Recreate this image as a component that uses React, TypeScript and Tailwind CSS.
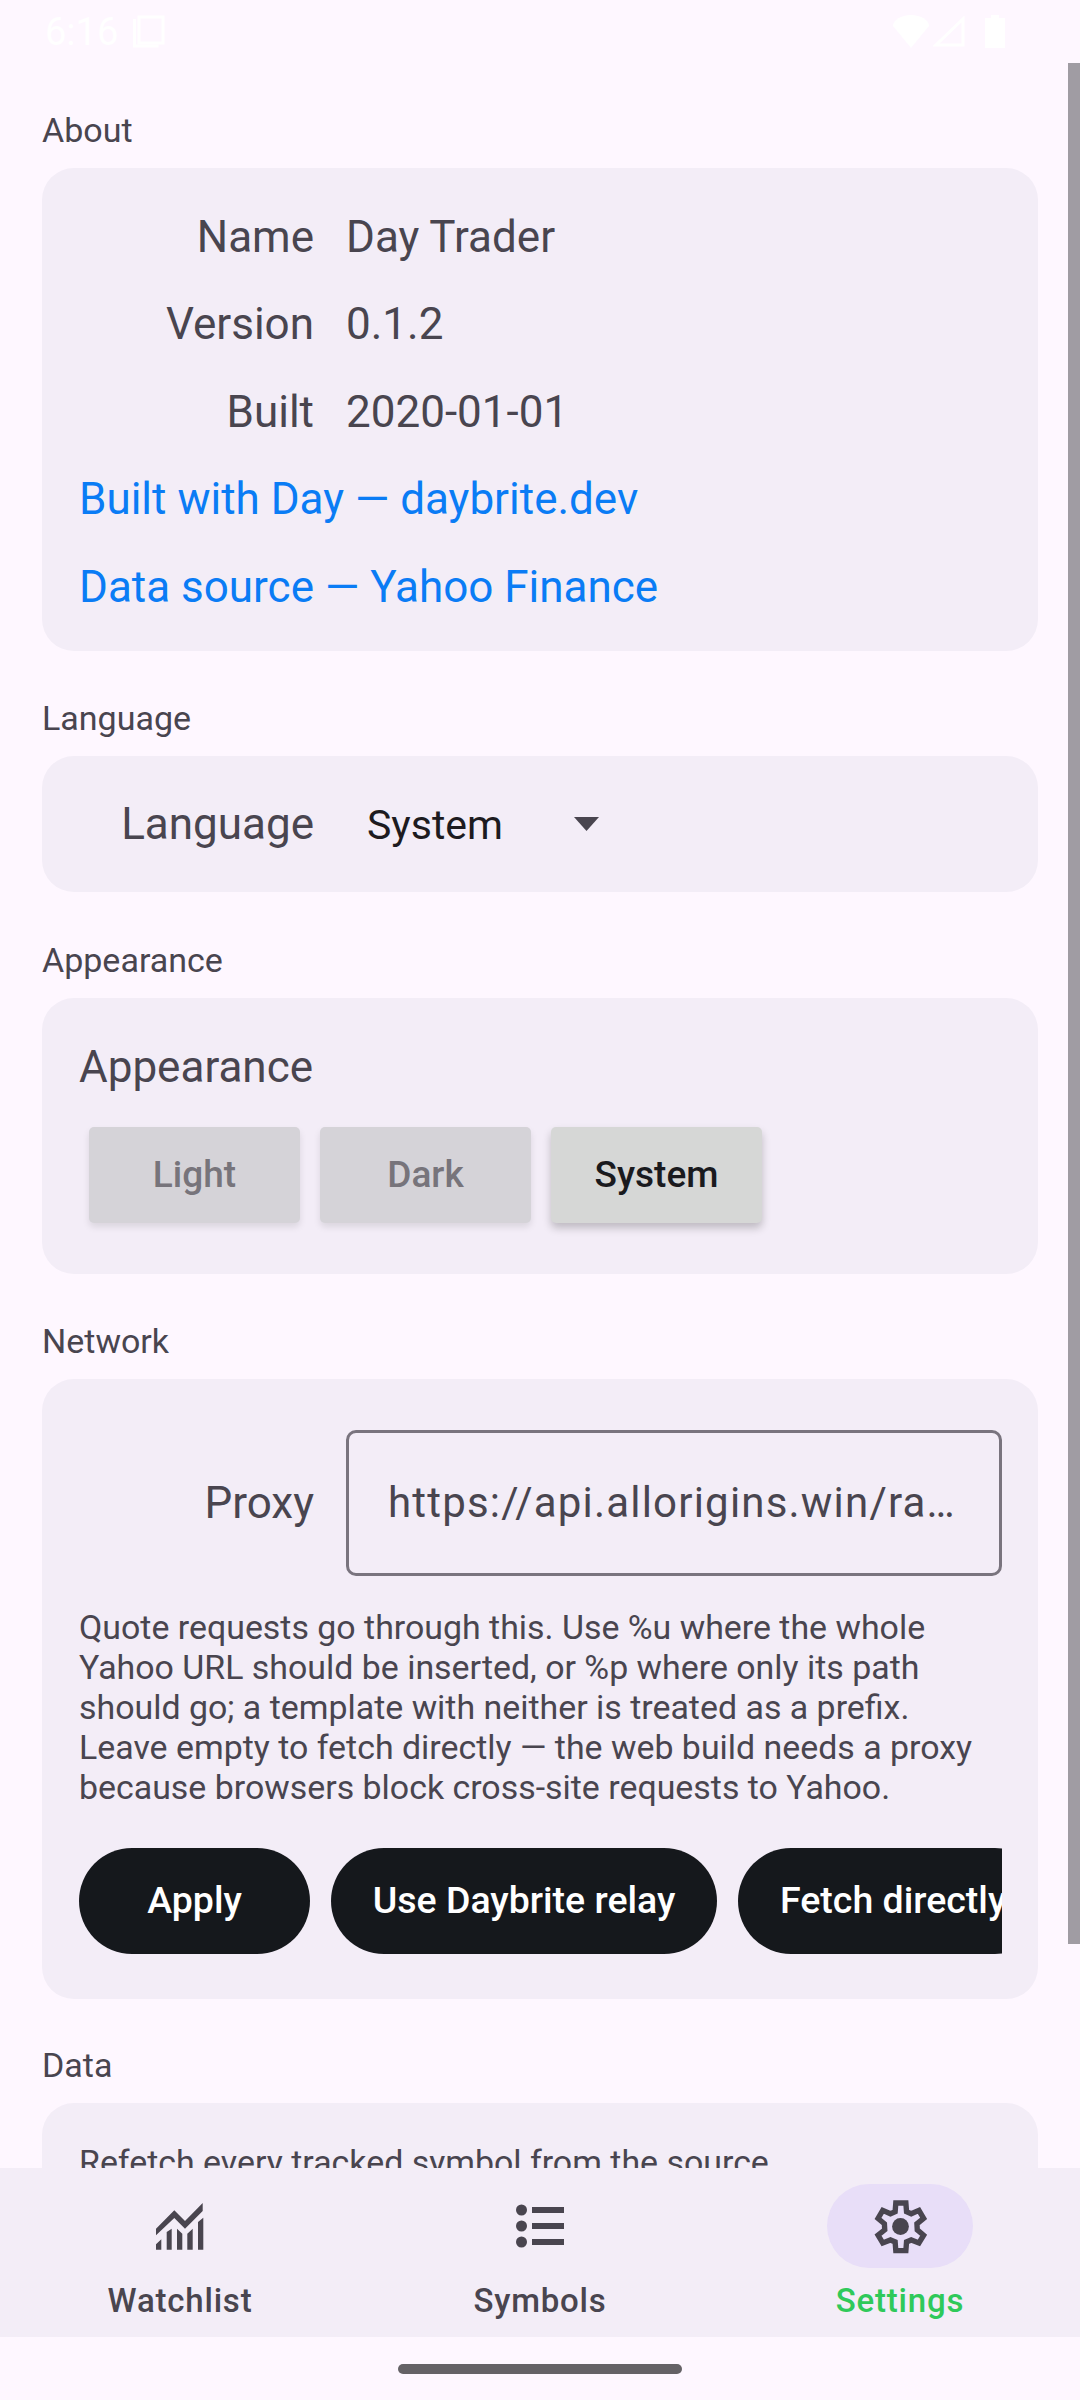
import React from "react";

const font = { fontFamily: "Roboto, sans-serif" };

function Row({ label, value }: { label: string; value: string }) {
  return (
    <div className="flex items-center h-[87.5px]">
      <div className="w-[235px] text-right text-[44px] leading-none text-[#49454f]">{label}</div>
      <div className="ml-[32px] text-[44px] leading-none text-[#49454f]">{value}</div>
    </div>
  );
}

function Section({ title, children, className }: { title: string; children: React.ReactNode; className: string }) {
  return (
    <section>
      <div className="h-[38px] flex items-center text-[34px] text-[#49454f] leading-none">{title}</div>
      <div className={"mt-[19px] rounded-[32px] bg-[#f3edf7] pl-[37px] pr-[36px] " + className}>{children}</div>
    </section>
  );
}

function SegBtn({ label, active }: { label: string; active?: boolean }) {
  return (
    <div
      className={
        "w-[211px] h-[96px] rounded-[5px] flex items-center justify-center text-[37px] font-medium " +
        (active
          ? "bg-[#d6d7d6] text-[#1a1a1e] shadow-[0_5px_8px_rgba(0,0,0,0.22)]"
          : "bg-[#d5d3d8] text-[#77747b] shadow-[0_4px_7px_rgba(0,0,0,0.1)]")
      }
    >
      {label}
    </div>
  );
}

function Pill({ label, className }: { label: string; className: string }) {
  return (
    <div className={"h-[106px] rounded-full bg-[#15181c] text-white text-[37.5px] font-medium flex items-center shrink-0 " + className}>
      <span className="whitespace-nowrap">{label}</span>
    </div>
  );
}

function NavItem({ label, active, children }: { label: string; active?: boolean; children: React.ReactNode }) {
  return (
    <div className="flex-1 flex flex-col items-center pt-[16px]">
      <div className={"w-[146px] h-[84px] rounded-[42px] flex items-center justify-center " + (active ? "bg-[#e8def8]" : "")}>
        {children}
      </div>
      <div className={"mt-[11px] text-[33px] leading-[44px] font-medium tracking-[0.8px] " + (active ? "text-[#2fc95a]" : "text-[#49454f]")}>
        {label}
      </div>
    </div>
  );
}

export default function App() {
  return (
    <div style={font} className="relative w-[1080px] h-[2400px] overflow-hidden bg-[#fef7ff] flex flex-col">
      <div className="h-[63px] shrink-0 flex items-center justify-between pl-[45px] pr-[75px] text-white">
        <div className="flex items-center gap-[15px] text-[38px] leading-none">
          <span>6:16</span>
          <svg width="32" height="34" viewBox="0 0 32 34" fill="none" stroke="#fff" strokeWidth="3">
            <rect x="6" y="2" width="24" height="26" />
            <path d="M1.500 4v27h24" />
          </svg>
        </div>
        <div className="flex items-center gap-[3px]">
          <svg width="38" height="33" viewBox="0 0 38 33" fill="#fff"><path d="M19 33 1 11C1 5 9 0 19 0s18 5 18 11z" /></svg>
          <svg width="32" height="31" viewBox="0 0 32 31" fill="none" stroke="#fff" strokeWidth="3" className="mr-[17px]"><path d="M30 3v26H3z" /></svg>
          <svg width="20" height="33" viewBox="0 0 20 33" fill="#fff"><path d="M6 0h8v3h6v30H0V3h6z" /></svg>
        </div>
      </div>

      <div className="flex-1 min-h-0 overflow-hidden pl-[42px] pr-[42px] pt-[48px]">
        <Section title="About" className="pt-[25px] pb-[20px]">
          <Row label="Name" value="Day Trader" />
          <Row label="Version" value="0.1.2" />
          <Row label="Built" value="2020-01-01" />
          <div className="h-[87.5px] flex items-center text-[44px] leading-none text-[#0a7cf5]">Built with Day — daybrite.dev</div>
          <div className="h-[87.5px] flex items-center text-[44px] leading-none text-[#0a7cf5]">Data source — Yahoo Finance</div>
        </Section>

        <div className="mt-[48px]">
          <Section title="Language" className="h-[136px] flex items-center">
            <div className="w-[235px] text-right text-[44px] leading-none text-[#49454f]">Language</div>
            <div className="ml-[53px] pt-[3px] text-[41px] leading-none text-[#1d1b20]">System</div>
            <svg className="ml-[71px]" width="25" height="14" viewBox="0 0 25 14" fill="#49454f"><path d="M0 0h25L12.500 14z" /></svg>
          </Section>
        </div>

        <div className="mt-[49px]">
          <Section title="Appearance" className="h-[276px] pt-[43px]">
            <div className="text-[44px] leading-[52px] text-[#49454f]">Appearance</div>
            <div className="mt-[34px] ml-[10px] flex gap-[20px]">
              <SegBtn label="Light" />
              <SegBtn label="Dark" />
              <SegBtn label="System" active />
            </div>
          </Section>
        </div>

        <div className="mt-[48px]">
          <Section title="Network" className="h-[620px] pt-[51px]">
            <div className="flex items-center">
              <div className="w-[235px] text-right text-[44px] leading-none text-[#49454f]">Proxy</div>
              <div className="ml-[32px] w-[656px] h-[146px] rounded-[10px] border-[3px] border-[#79747e] flex items-center px-[39px] text-[42px] tracking-[1.2px] text-[#49454f]">
                <span className="whitespace-nowrap">https://api.allorigins.win/ra…</span>
              </div>
            </div>
            <p className="mt-[32px] text-[33.9px] leading-[40px] text-[#49454f]">
              Quote requests go through this. Use %u where the whole Yahoo URL should be inserted, or %p where only its path should go; a template with neither is treated as a prefix. Leave empty to fetch directly — the web build needs a proxy because browsers block cross-site requests to Yahoo.
            </p>
            <div className="mt-[40px] flex gap-[21px] overflow-hidden">
              <Pill label="Apply" className="w-[231px] justify-center" />
              <Pill label="Use Daybrite relay" className="w-[386px] justify-center" />
              <Pill label="Fetch directly" className="pl-[42px] pr-[42px]" />
            </div>
          </Section>
        </div>

        <div className="mt-[47px]">
          <Section title="Data" className="h-[300px] pt-[40px]">
            <p className="text-[33.9px] leading-[40px] text-[#49454f]">Refetch every tracked symbol from the source</p>
          </Section>
        </div>
      </div>

      <nav className="shrink-0 h-[169px] bg-[#f3edf7] flex">
        <NavItem label="Watchlist">
          <svg width="48" height="47" viewBox="0 0 48 47" fill="#49454f">
            <path d="M0 25.700 18.300 7.300 29 18 46.700 0v8L29 25.700 18.300 15 0 32.300z" />
            <path d="M0 41.300l5.300-5v10.400H0zM10.700 29l5-3.300v21h-5zM21 25.700l5.300 5v16H21zM31.300 30.700l5.400-5v21h-5.400zM42 19l5.300-4.300v32H42z" />
          </svg>
        </NavItem>
        <NavItem label="Symbols">
          <svg width="48" height="44" viewBox="0 0 48 44" fill="#49454f">
            <circle cx="5.500" cy="6" r="5.500" />
            <circle cx="5.500" cy="22" r="5.500" />
            <circle cx="5.500" cy="38" r="5.500" />
            <path d="M16 3h32v6H16zM16 19h32v6H16zM16 35h32v6H16z" />
          </svg>
        </NavItem>
        <NavItem label="Settings" active>
          <svg width="55" height="55" viewBox="156 54 164 164">
            <path
              d="M224 66H254L256 92 270 98 293 88 307 112 287 128 288 146 307 162 293 185 270 176 256 182 254 208H224L222 182 208 176 185 185 171 162 191 146 190 128 171 112 185 88 208 98 222 92z"
              fill="none"
              stroke="#49454f"
              strokeWidth="16"
            />
            <circle cx="238" cy="136" r="25" fill="#49454f" />
          </svg>
        </NavItem>
      </nav>

      <div className="h-[63px] shrink-0 flex justify-center pt-[27px]">
        <div className="w-[284px] h-[10px] rounded-full bg-[#656266]" />
      </div>

      <div className="absolute right-0 top-[63px] w-[12px] h-[1881px] bg-[#a09ca3]" />
    </div>
  );
}
